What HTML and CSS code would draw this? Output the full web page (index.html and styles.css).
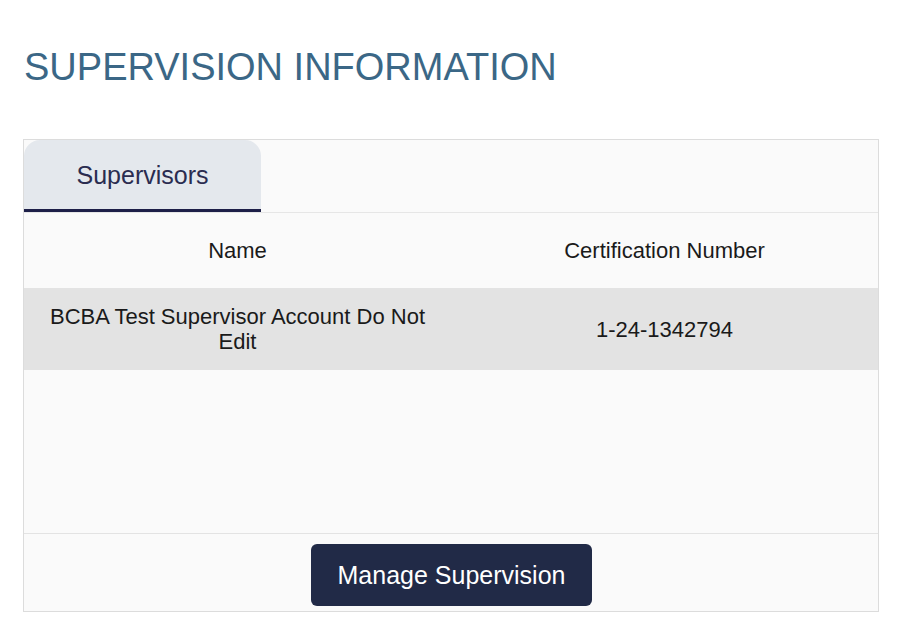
FILE: index.html
```html
<!DOCTYPE html>
<html>
<head>
<meta charset="utf-8">
<link rel="stylesheet" href="styles.css">
</head>
<body>
<div class="page">
  <h1 class="title">SUPERVISION INFORMATION</h1>
  <div class="card">
    <div class="tabs">
      <div class="tab active">Supervisors</div>
    </div>
    <div class="table">
      <div class="row head">
        <div class="cell">Name</div>
        <div class="cell">Certification Number</div>
      </div>
      <div class="row data">
        <div class="cell">BCBA Test Supervisor Account Do Not<br>Edit</div>
        <div class="cell">1-24-1342794</div>
      </div>
    </div>
    <div class="spacer"></div>
    <div class="footer">
      <button class="btn">Manage Supervision</button>
    </div>
  </div>
</div>
</body>
</html>
```

FILE: styles.css
```css
html, body {
  margin: 0;
  padding: 0;
  background: #ffffff;
  font-family: "Liberation Sans", Arial, sans-serif;
}
.page {
  padding: 46px 23px 0 23px;
  width: 856px;
}
.title {
  margin: 0 0 51px 1px;
  font-weight: normal;
  font-size: 38px;
  line-height: 42px;
  color: #3b6786;
  letter-spacing: 0;
}
.card {
  border: 1px solid #dcdcdc;
  background: #fafafa;
  display: flex;
  flex-direction: column;
  height: 471px;
}
.tabs {
  display: flex;
  border-bottom: 1px solid #e6e6e6;
  height: 72px;
}
.tab {
  width: 237px;
  box-sizing: border-box;
  background: #e4e8ed;
  border-radius: 16px 16px 0 0;
  border-bottom: 3px solid #1d1f48;
  display: flex;
  align-items: center;
  justify-content: center;
  font-size: 25px;
  color: #2a2c50;
  padding-top: 1px;
}
.row {
  display: grid;
  grid-template-columns: 1fr 1fr;
  align-items: center;
  text-align: center;
  color: #1a1a1a;
  font-size: 22px;
}
.row.head {
  height: 75px;
}
.row.data {
  height: 82px;
  background: #e3e3e3;
  line-height: 25px;
}
.cell {
  padding: 0 10px;
}
.spacer {
  flex: 1;
  border-bottom: 1px solid #e3e3e3;
}
.footer {
  height: 77px;
  box-sizing: border-box;
  padding-top: 10px;
  display: flex;
  justify-content: center;
  align-items: flex-start;
}
.btn {
  width: 281px;
  height: 62px;
  background: #212a47;
  color: #ffffff;
  border: none;
  border-radius: 6px;
  font-family: "Liberation Sans", Arial, sans-serif;
  font-size: 25px;
  margin: 0 0 0 1px;
  padding: 0;
}
```
